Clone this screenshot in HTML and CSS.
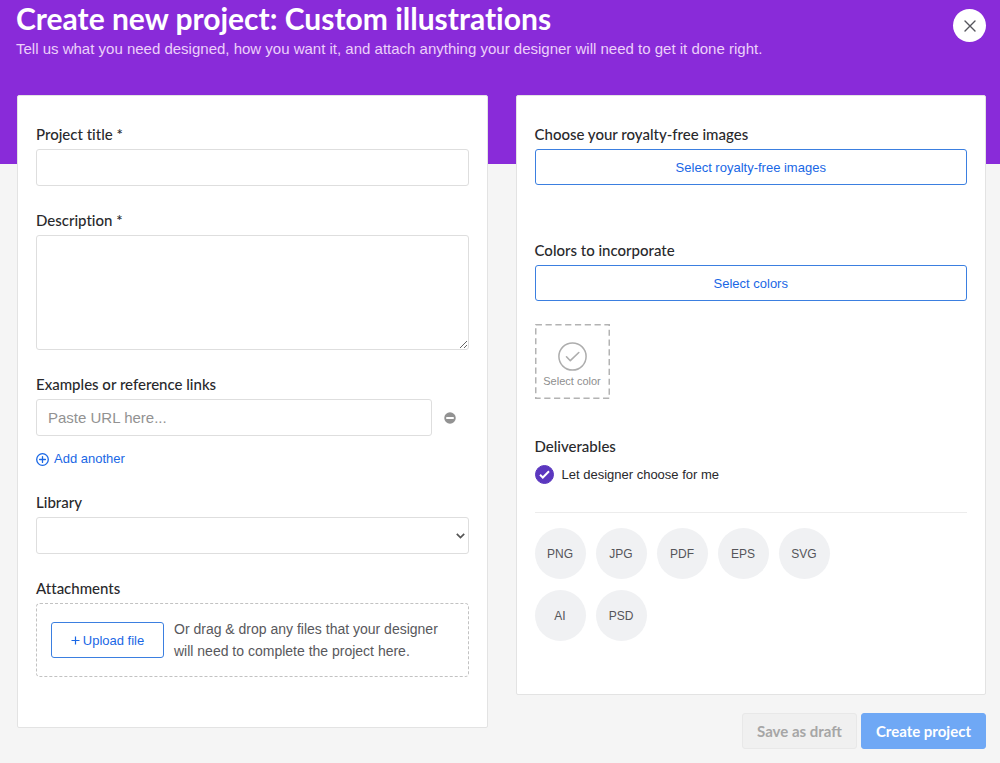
FILE: index.html
```html
<!DOCTYPE html>
<html lang="en">
<head>
    <meta charset="UTF-8">
    <meta name="viewport" content="width=device-width, initial-scale=1.0">
    <title>Create new project</title>
    <link rel="stylesheet" href="styles.css">
</head>
<body>

    <header class="page-header">
        <div class="page-heading">
            <h1>Create new project: Custom illustrations</h1>
            <p>Tell us what you need designed, how you want it, and attach anything your designer will need to get it done right.</p>
        </div>
        <button type="button" class="close-btn" aria-label="Close">
            <svg width="12" height="12" viewBox="0 0 12 12" fill="none" stroke="#55555c" stroke-width="1.4" stroke-linecap="round">
                <path d="M1 1l10 10M11 1L1 11"/>
            </svg>
        </button>
    </header>

    <form class="project-form" id="projectForm">
        <div class="card">
            <div class="form-group">
                <label class="label" for="projectTitle">Project title *</label>
                <input class="control" type="text" id="projectTitle">
            </div>

            <div class="form-group">
                <label class="label" for="description">Description *</label>
                <textarea class="control" id="description"></textarea>
            </div>

            <div class="form-group">
                <label class="label" for="referenceLink">Examples or reference links</label>
                <div class="link-row">
                    <input class="control" type="text" id="referenceLink" placeholder="Paste URL here...">
                    <button type="button" class="remove-btn" aria-label="Remove link">
                        <svg width="12" height="12" viewBox="0 0 12 12">
                            <circle cx="6" cy="6" r="5.75" fill="#929292"/>
                            <rect x="2.2" y="4.9" width="7.6" height="2.1" rx="0.5" fill="#fff"/>
                        </svg>
                    </button>
                </div>
                <button type="button" class="add-btn">
                    <svg width="13" height="13" viewBox="0 0 13 13" fill="none" stroke="#1967e5" stroke-width="1.3" stroke-linecap="round">
                        <circle cx="6.5" cy="6.5" r="5.8"/>
                        <path d="M6.5 3.6v5.8M3.6 6.5h5.8"/>
                    </svg>
                    Add another
                </button>
            </div>

            <div class="form-group">
                <label class="label" for="library">Library</label>
                <select class="control" id="library">
                    <option value=""></option>
                </select>
            </div>

            <div class="form-group">
                <h2 class="label">Attachments</h2>
                <div class="drop-zone">
                    <button type="button" class="outline-btn upload-btn">
                        <svg width="9" height="9" viewBox="0 0 9 9" stroke="#1967e5" stroke-width="1.2">
                            <path d="M4.5 0.5v8M0.5 4.5h8"/>
                        </svg>
                        Upload file
                    </button>
                    <p>Or drag &amp; drop any files that your designer will need to complete the project here.</p>
                </div>
            </div>
        </div>

        <div class="side">
            <div class="card">
                <div class="images-group">
                    <h2 class="label">Choose your royalty-free images</h2>
                    <button type="button" class="outline-btn">Select royalty-free images</button>
                </div>

                <div class="colors-group">
                    <h2 class="label">Colors to incorporate</h2>
                    <button type="button" class="outline-btn">Select colors</button>
                    <button type="button" class="color-box">
                        <svg width="29" height="29" viewBox="0 0 29 29" fill="none" stroke="#adadad" stroke-linecap="round" stroke-linejoin="round">
                            <circle cx="14.5" cy="14.5" r="13.6" stroke-width="1.5"/>
                            <path d="M8.5 14.8l3.8 3.9 8.5-8.2" stroke-width="1.6"/>
                        </svg>
                        Select color
                    </button>
                </div>

                <div class="deliverables">
                    <h2 class="label">Deliverables</h2>
                    <div class="check-row">
                        <input type="checkbox" id="designerChoice" checked>
                        <label for="designerChoice">Let designer choose for me</label>
                    </div>
                    <div class="formats">
                        <button type="button">PNG</button>
                        <button type="button">JPG</button>
                        <button type="button">PDF</button>
                        <button type="button">EPS</button>
                        <button type="button">SVG</button>
                        <button type="button">AI</button>
                        <button type="button">PSD</button>
                    </div>
                </div>
            </div>

            <div class="actions">
                <button type="button" class="draft-btn">Save as draft</button>
                <button type="submit" class="create-btn">Create project</button>
            </div>
        </div>
    </form>

</body>
</html>
```

FILE: styles.css
```css
* {
    box-sizing: border-box;
}

body {
    font-family: "Liberation Sans", Arial, sans-serif;
    font-variant-ligatures: none;
    background-color: #f5f5f5;
    color: #29292c;
    margin: 0;
}

h1, h2, p {
    margin: 0;
}

button {
    font-family: inherit;
    padding: 0;
    border: none;
    background: none;
    cursor: pointer;
}

svg {
    flex: none;
}

.page-header {
    display: flex;
    justify-content: space-between;
    align-items: flex-start;
    padding: 0 14px 102px 16px;
    background-color: #892bd9;
}

.page-heading h1 {
    font-family: Lato, sans-serif;
    font-size: 30px;
    line-height: 36px;
    font-weight: 700;
    color: #fff;
}

.page-heading p {
    font-size: 15px;
    line-height: 26px;
    color: #ecd0fa;
}

.close-btn {
    display: flex;
    align-items: center;
    justify-content: center;
    width: 33px;
    height: 33px;
    margin-top: 9px;
    border-radius: 50%;
    background-color: #fff;
}

/* the cards overlap the bottom of the header */
.project-form {
    display: grid;
    grid-template-columns: 1fr 1fr;
    gap: 28px;
    align-items: start;
    margin-top: -69px;
    padding: 0 14px 14px 17px;
}

.card {
    padding: 29px 18px 50px;
    background-color: #fff;
    border: 1px solid #e3e3e3;
    border-radius: 2px;
}

.side .card {
    padding-bottom: 53px;
}

.form-group + .form-group {
    margin-top: 25px;
}

.label {
    display: block;
    margin-bottom: 6px;
    font-family: Lato, sans-serif;
    font-size: 15px;
    line-height: 18px;
    font-weight: 500;
}

.control {
    display: block;
    width: 100%;
    height: 37px;
    padding: 0 11px;
    border: 1px solid #dedede;
    border-radius: 3px;
    background-color: #fff;
    font-family: inherit;
    font-size: 15px;
    color: #29292c;
}

.control::placeholder {
    color: #929292;
}

.control:focus {
    border-color: #1967e5;
    outline: none;
}

textarea.control {
    height: 115px;
    padding: 8px 11px;
}

select.control {
    appearance: none;
    background-image: url("data:image/svg+xml,%3Csvg xmlns='http://www.w3.org/2000/svg' width='9' height='6' fill='none' stroke='%23555' stroke-width='1.7'%3E%3Cpath d='M0.8 0.8l3.7 3.7 3.7-3.7'/%3E%3C/svg%3E");
    background-repeat: no-repeat;
    background-position: right 3px center;
}

.link-row {
    display: flex;
    align-items: center;
    gap: 12px;
    padding-right: 13px;
}

.remove-btn {
    display: flex;
}

.add-btn {
    display: flex;
    align-items: center;
    gap: 5px;
    margin-top: 14px;
    font-size: 13px;
    line-height: 18px;
    color: #1967e5;
}

.outline-btn {
    display: flex;
    align-items: center;
    justify-content: center;
    width: 100%;
    height: 36px;
    border: 1px solid #3b7fe0;
    border-radius: 3px;
    background-color: #fff;
    font-size: 13px;
    color: #1967e5;
}

.drop-zone {
    display: flex;
    align-items: center;
    gap: 10px;
    padding: 14px;
    border: 1px dashed #c2c2c2;
    border-radius: 4px;
}

.drop-zone p {
    font-size: 14px;
    line-height: 22px;
    color: #58585c;
}

.upload-btn {
    flex: none;
    gap: 3px;
    width: 113px;
}

.colors-group {
    margin-top: 56px;
}

.color-box {
    display: flex;
    flex-direction: column;
    align-items: center;
    justify-content: center;
    gap: 4px;
    width: 75px;
    height: 75px;
    margin-top: 23px;
    padding-top: 6px;
    background-image: url("data:image/svg+xml,%3Csvg xmlns='http://www.w3.org/2000/svg' width='75' height='75'%3E%3Crect x='.75' y='.75' width='73.5' height='73.5' fill='none' stroke='%23b3b3b3' stroke-width='1.5' stroke-dasharray='6.2 3.6'/%3E%3C/svg%3E");
    font-size: 11px;
    line-height: 12px;
    color: #8e8e8e;
}

.deliverables {
    margin-top: 38px;
}

.check-row {
    display: flex;
    align-items: center;
    gap: 8px;
    padding: 4px 0 28px;
    border-bottom: 1px solid #ececec;
    font-size: 13px;
    line-height: 19px;
}

.check-row input {
    appearance: none;
    width: 19px;
    height: 19px;
    margin: 0;
    border: 1px solid #5b37bf;
    border-radius: 50%;
}

.check-row input:checked {
    background: #5b37bf url("data:image/svg+xml,%3Csvg xmlns='http://www.w3.org/2000/svg' width='11' height='9' fill='none' stroke='%23fff' stroke-width='2'%3E%3Cpath d='M1 4.8l2.8 2.7L10 1.2'/%3E%3C/svg%3E") no-repeat center;
}

.formats {
    display: grid;
    grid-template-columns: repeat(5, 51px);
    gap: 11px 10px;
    margin-top: 15px;
}

.formats button {
    height: 51px;
    border-radius: 50%;
    background-color: #f0f1f3;
    font-size: 12px;
    color: #55555a;
}

.actions {
    display: flex;
    justify-content: flex-end;
    gap: 4px;
    margin-top: 18px;
}

.actions button {
    height: 36px;
    padding: 0 14px;
    border: 1px solid #e8e8e8;
    border-radius: 3px;
    font-family: Lato, sans-serif;
    font-size: 15px;
    font-weight: 700;
}

.actions .draft-btn {
    background-color: #f0f0f0;
    color: #a6a6a6;
}

.actions .create-btn {
    border-color: #6fa8f5;
    background-color: #6fa8f5;
    color: #fff;
}
```
